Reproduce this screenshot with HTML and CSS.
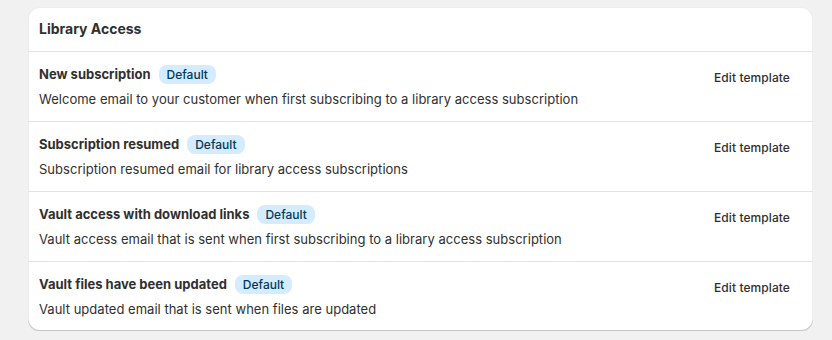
FILE: index.html
```html
<!DOCTYPE html>
<html>
<head>
<meta charset="utf-8">
<link rel="stylesheet" href="styles.css">
</head>
<body>
<div class="card">
  <div class="card-header">Library Access</div>
  <div class="row">
    <div class="info">
      <div class="title-line"><span class="title">New subscription</span><span class="badge">Default</span></div>
      <div class="desc">Welcome email to your customer when first subscribing to a library access subscription</div>
    </div>
    <button class="edit">Edit template</button>
  </div>
  <div class="row">
    <div class="info">
      <div class="title-line"><span class="title">Subscription resumed</span><span class="badge">Default</span></div>
      <div class="desc">Subscription resumed email for library access subscriptions</div>
    </div>
    <button class="edit">Edit template</button>
  </div>
  <div class="row">
    <div class="info">
      <div class="title-line"><span class="title">Vault access with download links</span><span class="badge">Default</span></div>
      <div class="desc">Vault access email that is sent when first subscribing to a library access subscription</div>
    </div>
    <button class="edit">Edit template</button>
  </div>
  <div class="row">
    <div class="info">
      <div class="title-line"><span class="title">Vault files have been updated</span><span class="badge">Default</span></div>
      <div class="desc">Vault updated email that is sent when files are updated</div>
    </div>
    <button class="edit">Edit template</button>
  </div>
</div>
</body>
</html>
```

FILE: styles.css
```css
html, body {
  margin: 0;
  background: #f1f1f1;
}
body {
  padding: 7px 19px 0 28px;
  font-family: Inter, "Noto Sans", sans-serif;
  font-size: 13px;
  color: #303030;
}
.card {
  background: #fff;
  border-radius: 12px;
  box-shadow: 0 1px 0 0 rgba(26,26,26,0.07), inset 0 -1px 0 0 rgba(0,0,0,0.17), inset 0 0 0 1px rgba(0,0,0,0.07);
  overflow: hidden;
}
.card-header {
  padding: 12px 11px 12px;
  font-size: 14px;
  font-weight: 650;
  line-height: 20px;
  border-bottom: 1px solid #e3e3e3;
}
.row {
  display: flex;
  justify-content: space-between;
  align-items: flex-start;
  padding: 12px 11px 12px;
  border-bottom: 1px solid #e3e3e3;
}
.row:last-child {
  border-bottom: none;
}
.info {
  display: flex;
  flex-direction: column;
  gap: 5px;
}
.title-line {
  display: flex;
  align-items: center;
  gap: 8px;
  height: 20px;
}
.title {
  font-weight: 650;
  line-height: 20px;
}
.badge {
  background: #d5ebff;
  color: #003a5a;
  border-radius: 8px;
  padding: 0 8px;
  line-height: 19px;
  font-size: 12px;
  font-weight: 450;
}
.desc {
  line-height: 20px;
  letter-spacing: 0.02px;
}
.edit {
  background: none;
  border: none;
  font-family: inherit;
  font-size: 12px;
  font-weight: 500;
  letter-spacing: 0.08px;
  color: #303030;
  height: 26px;
  padding: 0 12px;
}
```
